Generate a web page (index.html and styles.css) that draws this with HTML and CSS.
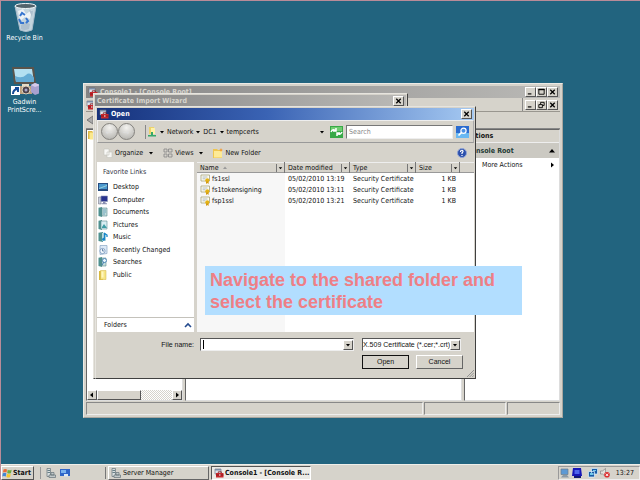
FILE: index.html
```html
<!DOCTYPE html>
<html lang="en">
<head>
<meta charset="utf-8">
<title>Console1 - Certificate Import</title>
<link rel="stylesheet" href="styles.css">
</head>
<body>
<svg class="defs" aria-hidden="true">
  <symbol id="toolbox" viewBox="0 0 10 10"><path fill="#dfe6ee" stroke="#667" stroke-width=".6" d="M1 1h6v5H1z"/><path fill="#7d8da5" d="M1 1h6v1.500H1z"/><path fill="#c9282d" d="M2 5h7.500v4.500H2z"/><path fill="none" stroke="#7c1418" stroke-width=".8" d="M4.300 5V3.800h3V5M2 7h7.500"/><path fill="#fff" d="M5 6.500h1.500v1H5z"/></symbol>
  <symbol id="close" viewBox="0 0 10 9"><path stroke="#000" stroke-width="1.400" d="M2.500 2l5 5M7.500 2l-5 5"/></symbol>
  <symbol id="min" viewBox="0 0 10 9"><path fill="#000" d="M2 6h4v1.300H2z"/></symbol>
  <symbol id="max" viewBox="0 0 10 9"><path fill="none" stroke="#000" d="M2 1.500h6v5.500H2z"/><path fill="#000" d="M1.500 1h7v1.500h-7z"/></symbol>
  <symbol id="restore" viewBox="0 0 10 9"><path fill="none" stroke="#000" d="M4 3.500V1.500h4V5H6M2 4h4v3.500H2z"/></symbol>
  <symbol id="down" viewBox="0 0 6 6"><path d="M1 2h4L3 4.500z"/></symbol>
  <symbol id="right" viewBox="0 0 6 6"><path d="M2 .5v5L5 3z"/></symbol>
  <symbol id="left" viewBox="0 0 6 6"><path d="M4 .5v5L1 3z"/></symbol>
  <symbol id="cert" viewBox="0 0 11 10"><path fill="#fffef2" stroke="#a6a37c" stroke-width=".8" d="M1 1h8.500v6H1z"/><path stroke="#8c9db0" stroke-width=".7" d="M2.500 3h5M2.500 4.800h3"/><circle cx="7.300" cy="6.200" r="2" fill="#e4b313"/><path fill="#d39a10" d="M6 7.500h2.600V10l-1.300-1L6 10z"/></symbol>
  <symbol id="folder" viewBox="0 0 10 10"><path fill="#dfb947" d="M1 1h4l1 1h3v7H1z"/><path fill="#fbe88d" d="M2.500 2.500H9V9.500H2.500z"/></symbol>
  <symbol id="public" viewBox="0 0 10 10"><path fill="#d8b93f" d="M1 1h4v9H1z"/><path fill="#f6e585" stroke="#d3b544" stroke-width=".5" d="M2.500.5h5.500v9H2.500z"/><path fill="#fff6c0" d="M3.500 1.500h2v6h-2z"/></symbol>
  <symbol id="book" viewBox="0 0 10 10"><path fill="#4f918f" d="M.5.8 4 0v10L.5 9z"/><path fill="#c5dedd" stroke="#5d8a91" stroke-width=".6" d="M4 1h5v8H4z"/><path stroke="#5a9bb8" stroke-width=".8" d="M5 3h3M5 5h3M5 7h2"/></symbol>
  <symbol id="picture" viewBox="0 0 10 10"><path fill="#4f918f" d="M.5.8 4 0v10L.5 9z"/><path fill="#d7eef3" stroke="#5d8a91" stroke-width=".6" d="M3 1h6v8H3z"/><path fill="#3e9ca4" d="m4 7 2-3 3 4H4z"/></symbol>
  <symbol id="music" viewBox="0 0 10 10"><path fill="#4f918f" d="M.5.8 5 0v10L.5 9z"/><path fill="#b8dae0" d="M4 1h4v8H4z"/><path fill="none" stroke="#1686c9" stroke-width="1.300" d="M6.500 7V1.500L9 3v2"/><circle cx="5.600" cy="7.200" r="1.500" fill="#1686c9"/></symbol>
  <symbol id="recent" viewBox="0 0 10 10"><path fill="#dce9f6" stroke="#8ba6c4" stroke-width=".7" d="M2 .5h7v8l-7 1z"/><circle cx="4.500" cy="6" r="2.600" fill="#f5faff" stroke="#6386b1" stroke-width=".7"/><path fill="none" stroke="#345b8b" stroke-width=".7" d="M4.500 4v2H6"/></symbol>
  <symbol id="searches" viewBox="0 0 10 10"><path fill="#4f918f" d="M.5.8 4 0v10L.5 9z"/><path fill="#c5dedd" stroke="#5d8a91" stroke-width=".6" d="M4 1h4v8H4z"/><circle cx="6.500" cy="3.500" r="2" fill="#e9f7ff" stroke="#4681b4" stroke-width=".9"/><path stroke="#4681b4" d="M6 5 4 8"/></symbol>
  <symbol id="desk" viewBox="0 0 10 10"><path fill="#284d80" d="M0 1h10v8H0z"/><path fill="#4b98ce" d="M1 2h8v5H1z"/><path fill="#9bd0da" d="m1 6 8-3v1L1 7z"/></symbol>
  <symbol id="computer" viewBox="0 0 10 10"><path fill="#c8d0e0" stroke="#667" stroke-width=".5" d="M.5 2h2.500v7H.5z"/><path fill="#29348f" stroke="#8c94b5" stroke-width=".6" d="M3 1h6.500v5.500H3z"/><path fill="#8a8fb1" d="M5 7h2.500v1.200H9v1H3.500v-1H5z"/></symbol>
  <symbol id="server" viewBox="0 0 10 10"><path fill="#d8dedf" stroke="#65737a" stroke-width=".7" d="M1 .5h3.500v8H1z"/><path stroke="#4b6870" stroke-width=".8" d="M1.500 2.500h2.500M1.500 4.500h2.500"/><path fill="#c2c9ca" stroke="#65737a" stroke-width=".7" d="M3 7h6.500v2.500H3zM5 4.500h3V7H5z"/></symbol>
</svg>

<main class="desktop">
  <nav class="shortcuts" aria-label="Desktop shortcuts">
    <a href="#bin" class="shortcut">
      <svg class="big" viewBox="0 0 28 30"><path fill="#dfe8ef" fill-opacity=".85" stroke="#a9bccb" d="M4 4h21l-4 24q-6 3-12 0z"/><ellipse cx="14.500" cy="4" rx="10.500" ry="2.500" fill="#52636c" stroke="#eef5f8"/><path fill="#fff" fill-opacity=".7" d="m7 9 5-2 3 5 6-4-2 9-5-2-5 4z"/><path fill="#adbfce" d="m10 23 4-3 5 2-1 5q-5 2-8 0zM18 8l4 1-1 6z"/><path fill="none" stroke="#3675cf" stroke-width="2" d="m9 14 2-3 3 2M8 17l2 4h3M15 16l2 3-2 2"/></svg>
      <span>Recycle Bin</span>
    </a>
    <a href="#printscreen" class="shortcut">
      <svg class="big" viewBox="0 0 28 30"><path fill="#5a544b" d="M1 1h22l2 17H3z"/><path fill="#b4e0f1" d="M3 3h18l2 13H5z"/><path fill="#65acd4" d="M4 10q7 3 11-1t8 3v4H5z"/><path fill="#bda27d" d="M9 20h12v8H9z"/><path fill="#e7ddc7" d="M11 18h7v3h-7z"/><circle cx="15" cy="24" r="4" fill="#4d424a" stroke="#ded3bb"/><circle cx="15" cy="24" r="1.500" fill="#aac"/><path fill="#a8a1cf" d="m20 19 4-2 5 2v8l-5 2-4-3z"/><path fill="#d4cbea" d="m20 19 4-2 5 2-5 2z"/><path fill="#fff" d="M0 20h9v9H0z"/><path fill="none" stroke="#154b98" stroke-width="2" d="M2 28q0-4 4-5M4 22h3v4"/></svg>
      <span>Gadwin<br>PrintScre...</span>
    </a>
  </nav>

  <section class="window console" aria-label="Console1">
    <header class="titlebar inactive">
      <svg class="ic"><use href="#toolbox"/></svg><h2>Console1 - [Console Root]</h2>
      <button class="cap" aria-label="Minimize"><svg><use href="#min"/></svg></button><button class="cap" aria-label="Maximize"><svg><use href="#max"/></svg></button><button class="cap" aria-label="Close"><svg><use href="#close"/></svg></button>
    </header>
    <div class="menubar">
      <svg class="ic"><use href="#toolbox"/></svg>
      <div class="child-caps"><button class="cap" aria-label="Minimize child"><svg><use href="#min"/></svg></button><button class="cap" aria-label="Restore child"><svg><use href="#restore"/></svg></button><button class="cap" aria-label="Close child"><svg><use href="#close"/></svg></button></div>
    </div>
    <div class="console-tools"><svg class="back" viewBox="0 0 8 10"><path fill="#aaa" stroke="#777" d="M7 1v8L1 5z"/></svg></div>
    <div class="panes">
      <div class="pane tree">
        <svg class="ic"><use href="#folder"/></svg>
        <div class="hscroll"><button class="scroll-btn" aria-label="Scroll left"><svg><use href="#left"/></svg></button><div class="thumb"></div><div class="track"></div><button class="scroll-btn" aria-label="Scroll right"><svg><use href="#right"/></svg></button></div>
      </div>
      <div class="pane middle"></div>
      <aside class="pane actions">
        <h3>Actions</h3>
        <div class="root">Console Root<svg class="tiny" viewBox="0 0 6 6"><path d="M0 4.500h6L3 1z"/></svg></div>
        <button class="more">More Actions<svg class="tiny"><use href="#right"/></svg></button>
      </aside>
    </div>
    <footer class="status"><span></span><span></span><span></span></footer>
  </section>

  <section class="window wizard" aria-label="Certificate Import Wizard">
    <header class="titlebar inactive"><h2>Certificate Import Wizard</h2><button class="cap" aria-label="Close wizard"><svg><use href="#close"/></svg></button></header>
  </section>

  <section class="window dialog" role="dialog" aria-label="Open">
    <header class="titlebar"><svg class="ic"><use href="#toolbox"/></svg><h2>Open</h2><button class="cap" aria-label="Close dialog"><svg><use href="#close"/></svg></button></header>
    <div class="navbar">
      <button class="round" aria-label="Back">←</button><button class="round" aria-label="Forward">→</button>
      <div class="address">
        <svg class="ic" viewBox="0 0 10 10"><path fill="#ecd36b" d="M2 0h5v7H2z"/><path fill="#fff2a8" d="M4 1h4v6H4z"/><path fill="#35a86a" d="M4 5h2v3h3v1.500H1V8h3z"/></svg>
        <svg class="tiny"><use href="#down"/></svg><span>Network</span><svg class="tiny"><use href="#down"/></svg><span>DC1</span><svg class="tiny"><use href="#down"/></svg><span>tempcerts</span><svg class="tiny end"><use href="#down"/></svg>
      </div>
      <button class="refresh" aria-label="Refresh"><svg viewBox="0 0 13 12"><path fill="#38a947" d="M0 0h13v12H0z"/><path fill="#6fce70" d="M1 1h11v4H1z"/><path fill="none" stroke="#fff" stroke-width="1.500" d="M1 6q2-4 5-1M6 2v3H3M12 6q-2 4-5 1M7 10V7h3"/></svg></button>
      <input class="search" type="text" placeholder="Search" aria-label="Search">
      <button class="refresh" aria-label="Start search"><svg viewBox="0 0 13 12"><path fill="#2a6bd0" d="M0 0h13v12H0z"/><path fill="#69b8f2" d="M0 7h13v5H0z"/><circle cx="7.500" cy="4.700" r="2.600" fill="#4b90e4" stroke="#fff" stroke-width="1.200"/><path stroke="#fff" stroke-width="1.700" d="M5.500 6.500 2.500 9.500"/></svg></button>
    </div>
    <div class="tools">
      <button><svg class="ic" viewBox="0 0 10 10"><path fill="#f8f8f5" stroke="#c5c4bd" stroke-width=".6" d="M1 1h5v6H1zM4 4h5v5.500H4z"/></svg>Organize<svg class="tiny"><use href="#down"/></svg></button>
      <button><svg class="ic" viewBox="0 0 10 10"><path fill="none" stroke="#858585" stroke-width=".8" d="M1 1h3v3H1zM1 6h3v3H1zM5.500 1v3H9V1zM5.500 9V6H9v3z"/></svg>Views<svg class="tiny"><use href="#down"/></svg></button>
      <button><svg class="ic" viewBox="0 0 10 10"><path fill="#efc64f" d="M0 1h4l1 1h4v8H0z"/><path fill="#fdea96" d="M1 3h8v6.500H1z"/><path fill="#f39a31" d="m8 0 .7 1.500L10 2l-1.300.6L8 4l-.7-1.400L6 2l1.300-.5z"/></svg>New Folder</button>
      <button class="help" aria-label="Help"><svg viewBox="0 0 10 10"><circle cx="5" cy="5" r="4.500" fill="#2c50ac" stroke="#91a4d4"/><path fill="none" stroke="#fff" stroke-width="1.200" d="M3.500 4q0-2 1.700-1.700Q7 3 5 5v1M5 7v1"/></svg></button>
    </div>
    <div class="browser">
      <nav class="side" aria-label="Favorite Links">
        <h3>Favorite Links</h3>
        <ul>
          <li><a href="#d"><svg class="ic"><use href="#desk"/></svg>Desktop</a></li>
          <li><a href="#c"><svg class="ic"><use href="#computer"/></svg>Computer</a></li>
          <li><a href="#o"><svg class="ic"><use href="#book"/></svg>Documents</a></li>
          <li><a href="#p"><svg class="ic"><use href="#picture"/></svg>Pictures</a></li>
          <li><a href="#m"><svg class="ic"><use href="#music"/></svg>Music</a></li>
          <li><a href="#r"><svg class="ic"><use href="#recent"/></svg>Recently Changed</a></li>
          <li><a href="#s"><svg class="ic"><use href="#searches"/></svg>Searches</a></li>
          <li><a href="#u"><svg class="ic"><use href="#public"/></svg>Public</a></li>
        </ul>
        <button class="folders">Folders<svg class="ic" viewBox="0 0 10 10"><path fill="none" stroke="#244a8e" stroke-width="1.600" d="m2 7 3-3 3 3"/></svg></button>
      </nav>
      <div class="files">
        <table>
          <colgroup><col class="sorted"><col class="date"><col class="type"><col class="size"><col></colgroup>
          <thead><tr>
            <th><div>Name<svg class="sort" viewBox="0 0 6 6"><path fill="#999" d="M1 4h4L3 1.500z"/></svg><svg class="drop"><use href="#down"/></svg></div></th>
            <th><div>Date modified<svg class="drop"><use href="#down"/></svg></div></th>
            <th><div>Type<svg class="drop"><use href="#down"/></svg></div></th>
            <th><div>Size<svg class="drop"><use href="#down"/></svg></div></th>
            <th></th>
          </tr></thead>
          <tbody>
            <tr><td><div><svg class="ic"><use href="#cert"/></svg>fs1ssl</div></td><td>05/02/2010 13:19</td><td>Security Certificate</td><td>1 KB</td><td></td></tr>
            <tr><td><div><svg class="ic"><use href="#cert"/></svg>fs1tokensigning</div></td><td>05/02/2010 13:11</td><td>Security Certificate</td><td>1 KB</td><td></td></tr>
            <tr><td><div><svg class="ic"><use href="#cert"/></svg>fsp1ssl</div></td><td>05/02/2010 13:21</td><td>Security Certificate</td><td>1 KB</td><td></td></tr>
          </tbody>
        </table>
      </div>
    </div>
    <form class="choose">
      <label for="fname">File name:</label>
      <div class="combo"><span class="caret"></span><input id="fname" type="text"><svg class="arrow"><use href="#down"/></svg></div>
      <div class="combo filter"><select aria-label="File type"><option>X.509 Certificate (*.cer;*.crt)</option></select><svg class="arrow"><use href="#down"/></svg></div>
      <div class="buttons"><button type="button" class="push default">Open</button><button type="button" class="push">Cancel</button></div>
    </form>
    <svg class="grip" viewBox="0 0 8 8"><path stroke="#888" d="M0 8 8 0M3 8l5-5M6 8l2-2"/></svg>
  </section>

  <p class="callout">Navigate to the shared folder and select the certificate</p>
</main>

<footer class="taskbar">
  <button class="start"><svg class="flag" viewBox="0 0 11 10"><path fill="#ec6a35" d="M1.500 1.500Q3 .5 5 1.500L4.500 4.500q-2-1-3.500 0z"/><path fill="#70ad42" d="M5.700 1.800q2 1 4 0L9 5q-2 1-3.800 0z"/><path fill="#4386d4" d="M.8 5.300q2-1 3.500 0L3.800 8.500q-2-1-3.500 0z"/><path fill="#f4c62c" d="M5 5.800q2 1 3.800 0l-.7 3.200q-2 1-3.700 0z"/></svg>Start</button>
  <div class="quick"><button aria-label="Server Manager"><svg><use href="#server"/></svg></button><button aria-label="Show desktop"><svg viewBox="0 0 10 10"><path fill="#2f66c8" d="M0 1h10v7H0z"/><path fill="#7ab3ef" d="M1 2h5v3H1z"/><path fill="#dce9f4" d="M4 6h4v2.500H4z"/></svg></button></div>
  <button class="task"><svg class="ic"><use href="#server"/></svg>Server Manager</button>
  <button class="task active"><svg class="ic"><use href="#toolbox"/></svg>Console1 - [Console R...</button>
  <div class="tray">
    <svg viewBox="0 0 10 10"><path fill="#5d99d4" stroke="#6f7d8b" stroke-width=".7" d="M1 1h7v5.500H1z"/><path fill="#8c9aa6" d="M3 7h4l2 2.500H1z"/></svg>
    <svg viewBox="0 0 10 10"><path fill="#1717b8" d="M1 0h8l1 8H0z"/><path fill="#4e65ec" d="M2.500 2h5v4h-5z"/><path fill="#111a73" d="M2 8h7v2H2z"/></svg>
    <svg class="gap" viewBox="0 0 10 10"><path fill="#195ba5" stroke="#d9f2ff" stroke-width=".7" d="M3.500.500h6v5.500h-6zM.5 3.500h6V9h-6z"/><path fill="#72c9ec" d="M5 2h3v1H5zM2 5h3v2H2z"/></svg>
    <svg viewBox="0 0 10 10"><path fill="#e2e2de" stroke="#777" stroke-width=".6" d="M.5 3h2l3-2.500v8l-3-2.500h-2z"/><circle cx="7" cy="6.800" r="2.800" fill="#dc3030"/><path stroke="#fff" d="m5.800 5.600 2.400 2.400M8.200 5.600 5.800 8"/></svg>
    <time>13:27</time>
  </div>
</footer>
</body>
</html>
```
FILE: styles.css
```css
* { box-sizing: border-box; }
body {
  margin: 0; min-height: 100vh; display: flex; flex-direction: column;
  font: 7px/10px "DejaVu Sans Condensed", "DejaVu Sans", sans-serif; color: #111;
  background: #22647f; border-top: 1px solid #b98b98; border-left: 1px solid #b98b98;
}
h2, h3, p, ul { margin: 0; padding: 0; font: inherit; }
ul { list-style: none; }
button, input, select { font: inherit; color: inherit; margin: 0; padding: 0; border: 0; background: none; border-radius: 0; outline: 0; }
a { color: inherit; text-decoration: none; }
svg { display: block; flex: none; }
.defs { position: absolute; width: 0; height: 0; }
.ic { width: 10px; height: 10px; }
.tiny { width: 6px; height: 6px; }

.desktop { position: relative; flex: 1; }
.shortcuts { width: 47px; padding-top: 1px; display: flex; flex-direction: column; gap: 24px; }
.shortcut { display: flex; flex-direction: column; align-items: center; gap: 2px; color: #fff; line-height: 8px; text-align: center; }
.big { width: 28px; height: 30px; }

.window { position: absolute; display: flex; flex-direction: column; background: #d6d3cb; border: 1px solid; border-color: #e6e4de #404040 #404040 #e6e4de; padding: 1px; }
.console { left: 82px; top: 82px; width: 480px; height: 335px; border-color: #eceae5 #a9a69f #a9a69f #eceae5; padding: 2px; }
.wizard { left: 92px; top: 92px; width: 315px; height: 286px; }
.dialog { left: 94px; top: 105px; width: 381px; height: 273px; }

.titlebar { height: 12px; display: flex; align-items: center; gap: 2px; padding: 0 2px; background: linear-gradient(90deg, #15317b, #3a63b4 45%, #a5c9f2); color: #fff; font-weight: bold; }
.titlebar h2 { flex: 1; white-space: nowrap; }
.titlebar.inactive { background: linear-gradient(90deg, #858585, #bab9b6); color: #d8d6cf; }
.cap { width: 11px; height: 10px; background: #d6d3cb; border: 1px solid; border-color: #fff #555 #555 #fff; }
.titlebar .cap + .cap { margin-left: -2px; }
.cap svg { width: 9px; height: 8px; }

.menubar { height: 14px; display: flex; justify-content: space-between; align-items: center; border-bottom: 1px solid #99968f; }
.child-caps { display: flex; align-items: center; height: 13px; padding: 0 2px; border-left: 1px solid #888; }
.console-tools { height: 17px; display: flex; align-items: center; border-bottom: 1px solid #888; }
.back { width: 8px; height: 10px; }
.panes { flex: 1; display: grid; grid-template-columns: 97px 1fr 96px; gap: 2px; min-height: 0; }
.pane { background: #fff; border: 1px solid; border-color: #666 #ddd #ddd #666; min-width: 0; }
.tree { display: flex; flex-direction: column; justify-content: space-between; }
.hscroll { display: flex; height: 10px; }
.scroll-btn { width: 10px; background: #d6d3cb; border: 1px solid; border-color: #fff #555 #555 #fff; }
.scroll-btn svg { width: 6px; height: 6px; margin: auto; }
.thumb { width: 44px; background: #d6d3cb; border: 1px solid; border-color: #fff #555 #555 #fff; }
.track { flex: 1; background: repeating-conic-gradient(#d6d3cb 0 25%, #fff 0 50%) 0 0 / 2px 2px; }
.actions { font-weight: bold; }
.actions h3 { background: #d6d3cb; font-weight: bold; line-height: 12px; padding-left: 2px; border-bottom: 1px solid #eee; }
.root { background: #cbc9c2; display: flex; align-items: center; justify-content: space-between; height: 15px; padding: 0 4px 0 2px; color: #243a35; }
.more { width: 100%; height: 14px; display: flex; align-items: center; justify-content: space-between; padding: 0 4px 0 17px; font-weight: normal; }
.status { height: 13px; display: grid; grid-template-columns: 1fr 82px 53px; gap: 1px; margin-top: 1px; }
.status span { border: 1px solid; border-color: #888 #eee #eee #888; }

.navbar { height: 23px; display: flex; align-items: center; padding: 0 4px 0 3px; border: 1px solid; border-color: #eee #aaa #999 #eee; }
.round { width: 17px; height: 17px; border-radius: 50%; border: 1px solid #85837f; background: radial-gradient(circle at 50% 25%, #f4f3f0, #aeada8); color: #ddd; font-size: 9px; line-height: 12px; }
.address { flex: 1; height: 14px; display: flex; align-items: center; gap: 2px; margin-left: 10px; padding: 0 5px 0 1px; border-left: 1px solid #888; }
.end { margin-left: auto; }
.refresh { width: 13px; height: 12px; }
.refresh svg { width: 13px; height: 12px; }
.search { width: 107px; height: 14px; margin: 0 3px; padding: 0 2px; background: #fff; border: 1px solid; border-color: #777 #eee #eee #777; }
.search::placeholder { color: #888; opacity: 1; }
.tools { height: 19px; display: flex; align-items: center; gap: 9px; padding: 0 7px 0 6px; }
.tools button { display: flex; align-items: center; gap: 2px; white-space: nowrap; }
.tools .tiny { margin-left: 3px; }
.tools .help { margin-left: auto; }
.help svg { width: 10px; height: 10px; }

.browser { flex: 1; display: grid; grid-template-columns: 97px 1fr; gap: 3px; min-height: 0; }
.side { background: #fff; display: flex; flex-direction: column; }
.side h3 { padding: 5px 6px 4px; color: #334; }
.side ul { height: 100px; display: grid; grid-auto-rows: 1fr; }
.side a { display: flex; align-items: center; gap: 5px; height: 100%; padding-left: 1px; }
.folders { margin-top: auto; height: 15px; display: flex; justify-content: space-between; align-items: center; padding: 0 1px 0 7px; border-top: 1px solid #c4c2bb; }
.files { background: linear-gradient(90deg, #f7f7f7 88px, #fff 88px); }
table { width: 100%; table-layout: fixed; border-collapse: collapse; }
.sorted { width: 88px; } .date { width: 65px; } .type { width: 66px; } .size { width: 44px; }
th { height: 11px; padding: 0; font-weight: normal; background: #d6d3cb; box-shadow: inset 0 -1px #999, inset 0 1px #eee; }
th div { display: flex; align-items: center; height: 11px; padding-left: 3px; border-right: 1px solid #777; white-space: nowrap; }
.drop { width: 8px; height: 8px; padding: 1px; margin-left: auto; border-left: 1px solid #777; }
.sort { width: 6px; height: 6px; margin-left: 3px; }
td { height: 11px; padding: 0 0 0 3px; line-height: 10px; white-space: nowrap; }
td:nth-child(4) { text-align: right; padding-right: 4px; }
td div { display: flex; align-items: center; gap: 1px; }
td .ic { width: 11px; height: 10px; }

.choose { height: 45px; display: grid; grid-template-columns: 97px 154px 101px; grid-template-rows: 13px 14px; column-gap: 6px; row-gap: 4px; padding-top: 6px; font-family: "Liberation Sans", Arial, sans-serif; }
.choose label { text-align: right; line-height: 13px; }
.combo { display: flex; align-items: center; background: #fff; border: 1px solid; border-color: #555 #eee #eee #555; min-width: 0; }
.combo input, .combo select { flex: 1; min-width: 0; height: 11px; padding: 0; appearance: none; }
.filter { margin-left: 2px; }
.caret { width: 1px; height: 9px; margin-left: 2px; background: #000; }
.arrow { width: 10px; height: 10px; padding: 1px; background: #d6d3cb; border: 1px solid; border-color: #fff #555 #555 #fff; }
.buttons { grid-column: 3; display: flex; gap: 7px; margin-left: 2px; }
.push { width: 47px; height: 14px; flex: none; border: 1px solid; border-color: #fff #666 #666 #fff; background: #d6d3cb; }
.default { border-color: #111; }
.grip { position: absolute; right: 1px; bottom: 1px; width: 7px; height: 7px; }

.callout { position: absolute; left: 204px; top: 265px; width: 317px; padding: 3px 5px 2px; font: bold 18px/22px "Liberation Sans", Arial, sans-serif; color: #ee7f86; background: #b2deff; }

.taskbar { height: 16px; display: flex; align-items: center; background: #d6d3cb; border-top: 1px solid #efeee9; }
.start { width: 33px; height: 14px; display: flex; align-items: center; font-weight: bold; border: 1px solid; border-color: #fff #555 #555 #fff; }
.flag { width: 11px; height: 10px; }
.quick { width: 66px; height: 12px; display: flex; align-items: center; gap: 4px; margin-left: 6px; padding-left: 5px; border-left: 1px solid #999; border-right: 1px solid #777; }
.quick svg { width: 10px; height: 10px; }
.task { width: 101px; height: 14px; display: flex; align-items: center; gap: 2px; padding-left: 2px; margin-left: 2px; border: 1px solid; border-color: #fff #666 #666 #fff; white-space: nowrap; }
.active { width: 100px; gap: 1px; font-weight: bold; border-color: #555 #fff #fff #555; background: #ebeae6; }
.tray { height: 14px; margin-left: auto; display: flex; align-items: center; gap: 2px; padding: 0 5px 0 1px; border: 1px solid; border-color: #999 #eee #eee #999; }
.tray svg { width: 10px; height: 10px; }
.tray .gap { margin-left: 4px; }
.tray time { margin-left: 4px; }
```
